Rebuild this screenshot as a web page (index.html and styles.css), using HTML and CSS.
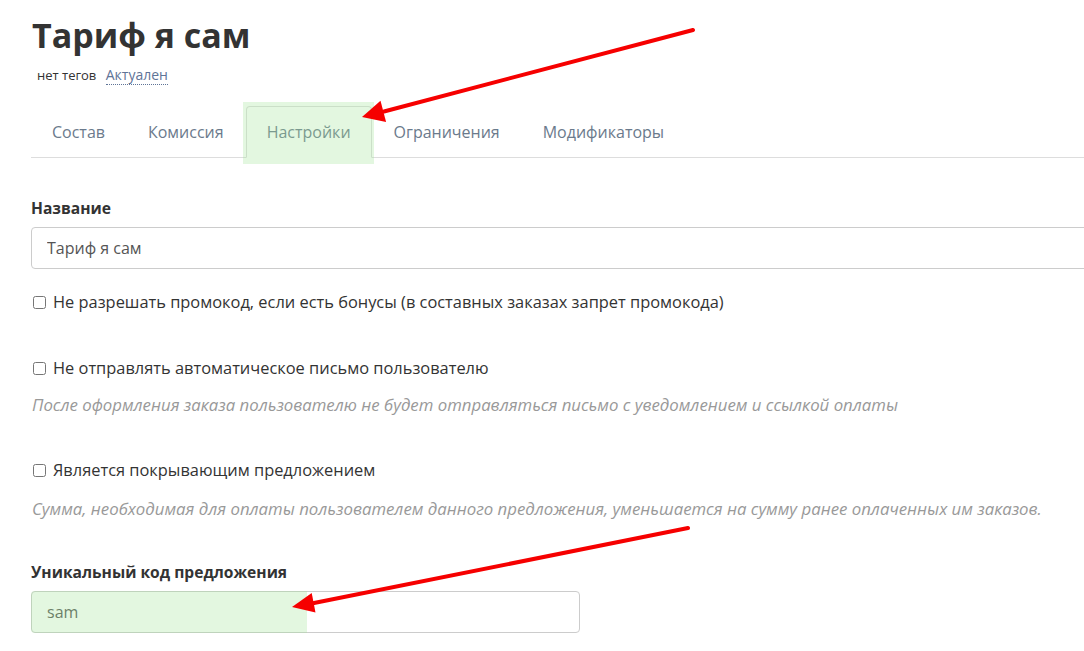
FILE: index.html
```html
<!DOCTYPE html>
<html lang="ru">
<head>
    <meta charset="UTF-8">
    <meta name="viewport" content="width=device-width, initial-scale=1.0">
    <title>Тариф я сам</title>
    <link rel="stylesheet" href="styles.css">
</head>
<body>
    <div class="page">
        <h1 class="title">Тариф я сам</h1>
        <div class="meta">
            <span class="tags">нет тегов</span>
            <a class="status" href="#">Актуален</a>
        </div>

        <ul class="tabs">
            <li><a href="#">Состав</a></li>
            <li><a href="#">Комиссия</a></li>
            <li class="active"><a href="#">Настройки</a><span class="mark mark-tab"></span></li>
            <li><a href="#">Ограничения</a></li>
            <li><a href="#">Модификаторы</a></li>
        </ul>

        <div class="form">
            <div class="field">
                <label class="field-label" for="name">Название</label>
                <input class="text-input wide" id="name" type="text" value="Тариф я сам">
            </div>

            <div class="check">
                <label><input type="checkbox"> Не разрешать промокод, если есть бонусы (в составных заказах запрет промокода)</label>
            </div>

            <div class="check">
                <label><input type="checkbox"> Не отправлять автоматическое письмо пользователю</label>
                <p class="hint">После оформления заказа пользователю не будет отправляться письмо с уведомлением и ссылкой оплаты</p>
            </div>

            <div class="check">
                <label><input type="checkbox"> Является покрывающим предложением</label>
                <p class="hint">Сумма, необходимая для оплаты пользователем данного предложения, уменьшается на сумму ранее оплаченных им заказов.</p>
            </div>

            <div class="field code-field">
                <label class="field-label" for="code">Уникальный код предложения</label>
                <div class="code-wrap">
                    <input class="text-input" id="code" type="text" value="sam">
                    <span class="mark mark-input"></span>
                </div>
            </div>
        </div>
    </div>

    <!-- annotation arrows -->
    <svg class="arrows" width="1084" height="651" viewBox="0 0 1084 651">
        <line x1="693" y1="30" x2="384" y2="111.5" stroke="#f60000" stroke-width="4" stroke-linecap="round"/>
        <polygon points="362,117 386.1,122 380.5,100.8" fill="#f60000"/>
        <line x1="688" y1="528" x2="314" y2="603" stroke="#f60000" stroke-width="4" stroke-linecap="round"/>
        <polygon points="292,607 315.5,612.6 311.7,593" fill="#f60000"/>
    </svg>
</body>
</html>
```

FILE: styles.css
```css
html, body {
    overflow: hidden;
}
body {
    margin: 0;
    font-family: "Open Sans", "Liberation Sans", sans-serif;
    color: #333;
    background: #fff;
    position: relative;
    height: 651px;
}
.page {
    padding: 14px 0 0 31px;
    width: 1120px;
}
.title {
    margin: 0 0 0 1px;
    font-size: 34px;
    font-weight: 700;
    line-height: 42px;
    color: #333;
}
.meta {
    margin: 10px 0 0 6px;
    font-size: 13px;
    line-height: 18px;
}
.tags {
    color: #333;
    margin-right: 6px;
}
.status {
    font-size: 14px;
    color: #5f7497;
    text-decoration: none;
    border-bottom: 1px dotted #5f7497;
}
.tabs {
    list-style: none;
    margin: 22px 0 0;
    padding: 0;
    display: flex;
    border-bottom: 1px solid #ddd;
}
.tabs li {
    position: relative;
    margin-right: 1px;
    margin-bottom: -1px;
}
.tabs a {
    display: block;
    padding: 15px 20px 15px;
    line-height: 20px;
    font-size: 16px;
    color: #6b7a8c;
    text-decoration: none;
    border: 1px solid transparent;
    border-radius: 4px 4px 0 0;
}
.tabs .active a {
    border-color: #ddd;
    border-bottom-color: #fff;
    background: #fff;
    color: #6b7a8c;
}
.mark {
    position: absolute;
    background: rgba(162, 228, 152, 0.3);
    pointer-events: none;
}
.mark-tab {
    top: -4px;
    left: -3px;
    right: -2px;
    bottom: -6px;
}
.form {
    padding-top: 40px;
}
.field-label {
    display: block;
    font-size: 15.6px;
    font-weight: 700;
    line-height: 20px;
    margin-bottom: 9px;
}
.text-input {
    display: block;
    box-sizing: border-box;
    height: 42px;
    padding: 0 15px;
    border: 1px solid #ccc;
    border-radius: 4px;
    font-family: inherit;
    font-size: 16px;
    color: #555;
    background: #fff;
}
.wide {
    width: 1100px;
}
.check {
    margin-top: 21px;
}
.check label {
    font-size: 16.4px;
    line-height: 24px;
    color: #333;
    display: flex;
    align-items: center;
}
.check input {
    width: 13px;
    height: 13px;
    margin: 0 7px 0 2px;
}
.check + .check {
    margin-top: 42px;
}
.hint {
    margin: 15px 0 0 1px;
    font-size: 16.8px;
    line-height: 20px;
    font-style: italic;
    color: #999;
}
.check + .check + .check {
    margin-top: 43px;
}
.check + .check + .check .hint {
    margin-top: 17px;
}
.code-field {
    margin-top: 43px;
}
.code-wrap {
    position: relative;
    width: 549px;
}
.code-wrap .text-input {
    width: 549px;
}
.mark-input {
    top: 0;
    left: 0;
    width: 276px;
    bottom: 0;
    border-radius: 4px 0 0 4px;
}
.arrows {
    position: absolute;
    top: 0;
    left: 0;
    pointer-events: none;
}
```
